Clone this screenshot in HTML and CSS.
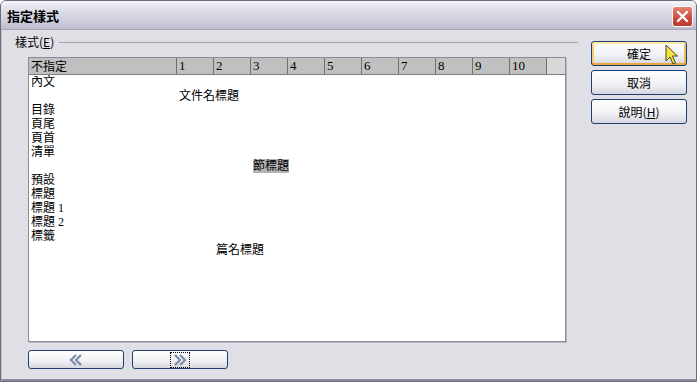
FILE: index.html
```html
<!DOCTYPE html>
<html lang="zh-Hant">
<head>
    <meta charset="UTF-8">
    <title>指定樣式</title>
    <link rel="stylesheet" href="styles.css">
</head>
<body>
    <div class="window">
        <div class="titlebar">
            <span class="title">指定樣式</span>
            <div class="close">
                <svg width="13" height="13" viewBox="0 0 13 13">
                    <path d="M2 2 L11 11 M11 2 L2 11" stroke="#fff" stroke-width="2.4" stroke-linecap="round"/>
                </svg>
            </div>
        </div>

        <div class="content">
            <div class="main">
                <div class="group-label">
                    <span>樣式(<u>E</u>)</span>
                    <span class="rule"></span>
                </div>

                <div class="list">
                    <div class="list-head">
                        <div class="head-name">不指定</div>
                        <div class="head-col">1</div>
                        <div class="head-col">2</div>
                        <div class="head-col">3</div>
                        <div class="head-col">4</div>
                        <div class="head-col">5</div>
                        <div class="head-col">6</div>
                        <div class="head-col">7</div>
                        <div class="head-col">8</div>
                        <div class="head-col">9</div>
                        <div class="head-col">10</div>
                        <div class="head-fill"></div>
                    </div>
                    <div class="list-body">
                        <div class="row lv0"><span>內文</span></div>
                        <div class="row lv1"><span>文件名標題</span></div>
                        <div class="row lv0"><span>目錄</span></div>
                        <div class="row lv0"><span>頁尾</span></div>
                        <div class="row lv0"><span>頁首</span></div>
                        <div class="row lv0"><span>清單</span></div>
                        <div class="row lv3"><span class="selected">節標題</span></div>
                        <div class="row lv0"><span>預設</span></div>
                        <div class="row lv0"><span>標題</span></div>
                        <div class="row lv0"><span>標題 1</span></div>
                        <div class="row lv0"><span>標題 2</span></div>
                        <div class="row lv0"><span>標籤</span></div>
                        <div class="row lv2"><span>篇名標題</span></div>
                    </div>
                </div>

                <div class="nav">
                    <div class="btn nav-btn">
                        <svg width="18" height="14" viewBox="0 0 18 14">
                            <path d="M9 2 L4 7 L9 12 M14 2 L9 7 L14 12" fill="none" stroke="#7c8aa6" stroke-width="2.2"/>
                        </svg>
                    </div>
                    <div class="btn nav-btn">
                        <span class="focus">
                            <svg width="18" height="14" viewBox="0 0 18 14">
                                <path d="M4 2 L9 7 L4 12 M9 2 L14 7 L9 12" fill="none" stroke="#7c8aa6" stroke-width="2.2"/>
                            </svg>
                        </span>
                    </div>
                </div>
            </div>

            <div class="side">
                <div class="btn default">確定</div>
                <div class="btn">取消</div>
                <div class="btn">說明(<u>H</u>)</div>
            </div>
        </div>

        <svg class="cursor" width="14" height="22" viewBox="0 0 14 22">
            <path d="M1 1 L1 17 L5 13 L8 20 L10.5 19 L7.5 12 L12.5 12 Z" fill="#efe23a" stroke="#4a4a20" stroke-width="1"/>
        </svg>
    </div>
</body>
</html>
```

FILE: styles.css
```css
body {
    margin: 0;
    padding: 0;
    background: #fff;
    font-family: "Liberation Serif", "Noto Sans CJK TC", serif;
    font-size: 12px;
    color: #000;
}

.window {
    position: relative;
    width: 697px;
    height: 382px;
    box-sizing: border-box;
    border: 1px solid #6c6c7c;
    border-radius: 6px 6px 0 0;
    background: #e0dfe6;
    overflow: hidden;
}

.titlebar {
    height: 28px;
    display: flex;
    align-items: center;
    justify-content: space-between;
    padding: 0 3px 0 6px;
    background: linear-gradient(#f6f6fa, #e2e2ec 25%, #d0d0de 65%, #bcbccc);
    border-bottom: 1px solid #a8a8b8;
}

.title {
    font-family: "Noto Sans CJK TC", sans-serif;
    font-weight: bold;
    font-size: 13px;
    line-height: 16px;
    margin-top: 1px;
}

.close {
    width: 19px;
    height: 19px;
    margin-top: 2px;
    border: 1px solid #fff;
    border-radius: 3px;
    background: linear-gradient(#e4846e, #cc4a3c 60%, #b83a30);
    display: flex;
    align-items: center;
    justify-content: center;
}

.content {
    display: flex;
    height: 351px;
    box-sizing: border-box;
    border-left: 1px solid #c4c4d0;
    border-bottom: 2px solid #8a8a98;
}

.main {
    width: 576px;
}

.group-label {
    display: flex;
    align-items: center;
    margin: 5px 0 0 13px;
    line-height: 14px;
    font-family: "Noto Sans CJK TC", sans-serif;
}

.rule {
    flex: 1;
    height: 0;
    border-top: 1px solid #a0a0a8;
    margin-left: 5px;
}

.list {
    margin: 8px 0 0 26px;
    width: 538px;
    height: 285px;
    box-sizing: border-box;
    border: 1px solid #8c8c98;
    box-shadow: 1px 1px 0 #b8b8c4;
    background: #fff;
}

.list-head {
    display: flex;
    height: 16px;
    border-bottom: 1px solid #808080;
    background: #c0c0c0;
    line-height: 15px;
}

.head-name,
.head-col {
    box-sizing: border-box;
    border-right: 1px solid #707070;
    padding-left: 2px;
}

.head-name {
    width: 148px;
    font-family: "Noto Sans CJK TC", sans-serif;
}

.head-col {
    width: 37px;
    font-size: 13px;
}

.head-fill {
    flex: 1;
    background: #d8d8d8;
}

.row {
    height: 14px;
    line-height: 14px;
    white-space: nowrap;
}

.lv0 { padding-left: 2px; }
.lv1 { padding-left: 150px; }
.lv2 { padding-left: 187px; }
.lv3 { padding-left: 224px; }

.selected {
    background: #b4b4b8;
}

.nav {
    display: flex;
    gap: 8px;
    margin: 8px 0 0 26px;
}

.btn {
    box-sizing: border-box;
    display: flex;
    align-items: center;
    justify-content: center;
    width: 96px;
    border: 1px solid #1c3e74;
    border-radius: 3px;
    background: linear-gradient(#ffffff, #f2f2f6 55%, #d6d6e0);
    font-family: "Noto Sans CJK TC", sans-serif;
    line-height: 14px;
}

.nav-btn {
    height: 19px;
}

.focus {
    display: flex;
    outline: 1px dotted #000;
}

.side {
    display: flex;
    flex-direction: column;
    gap: 4px;
    margin: 11px 0 0 13px;
}

.side .btn {
    height: 25px;
}

.default {
    box-shadow: inset 0 2px 0 #fde8a8, inset 0 -2px 0 #e8a838, inset 2px 0 0 #f6cc70, inset -2px 0 0 #f0bc58;
}

.cursor {
    position: absolute;
    left: 664px;
    top: 43px;
}
```
